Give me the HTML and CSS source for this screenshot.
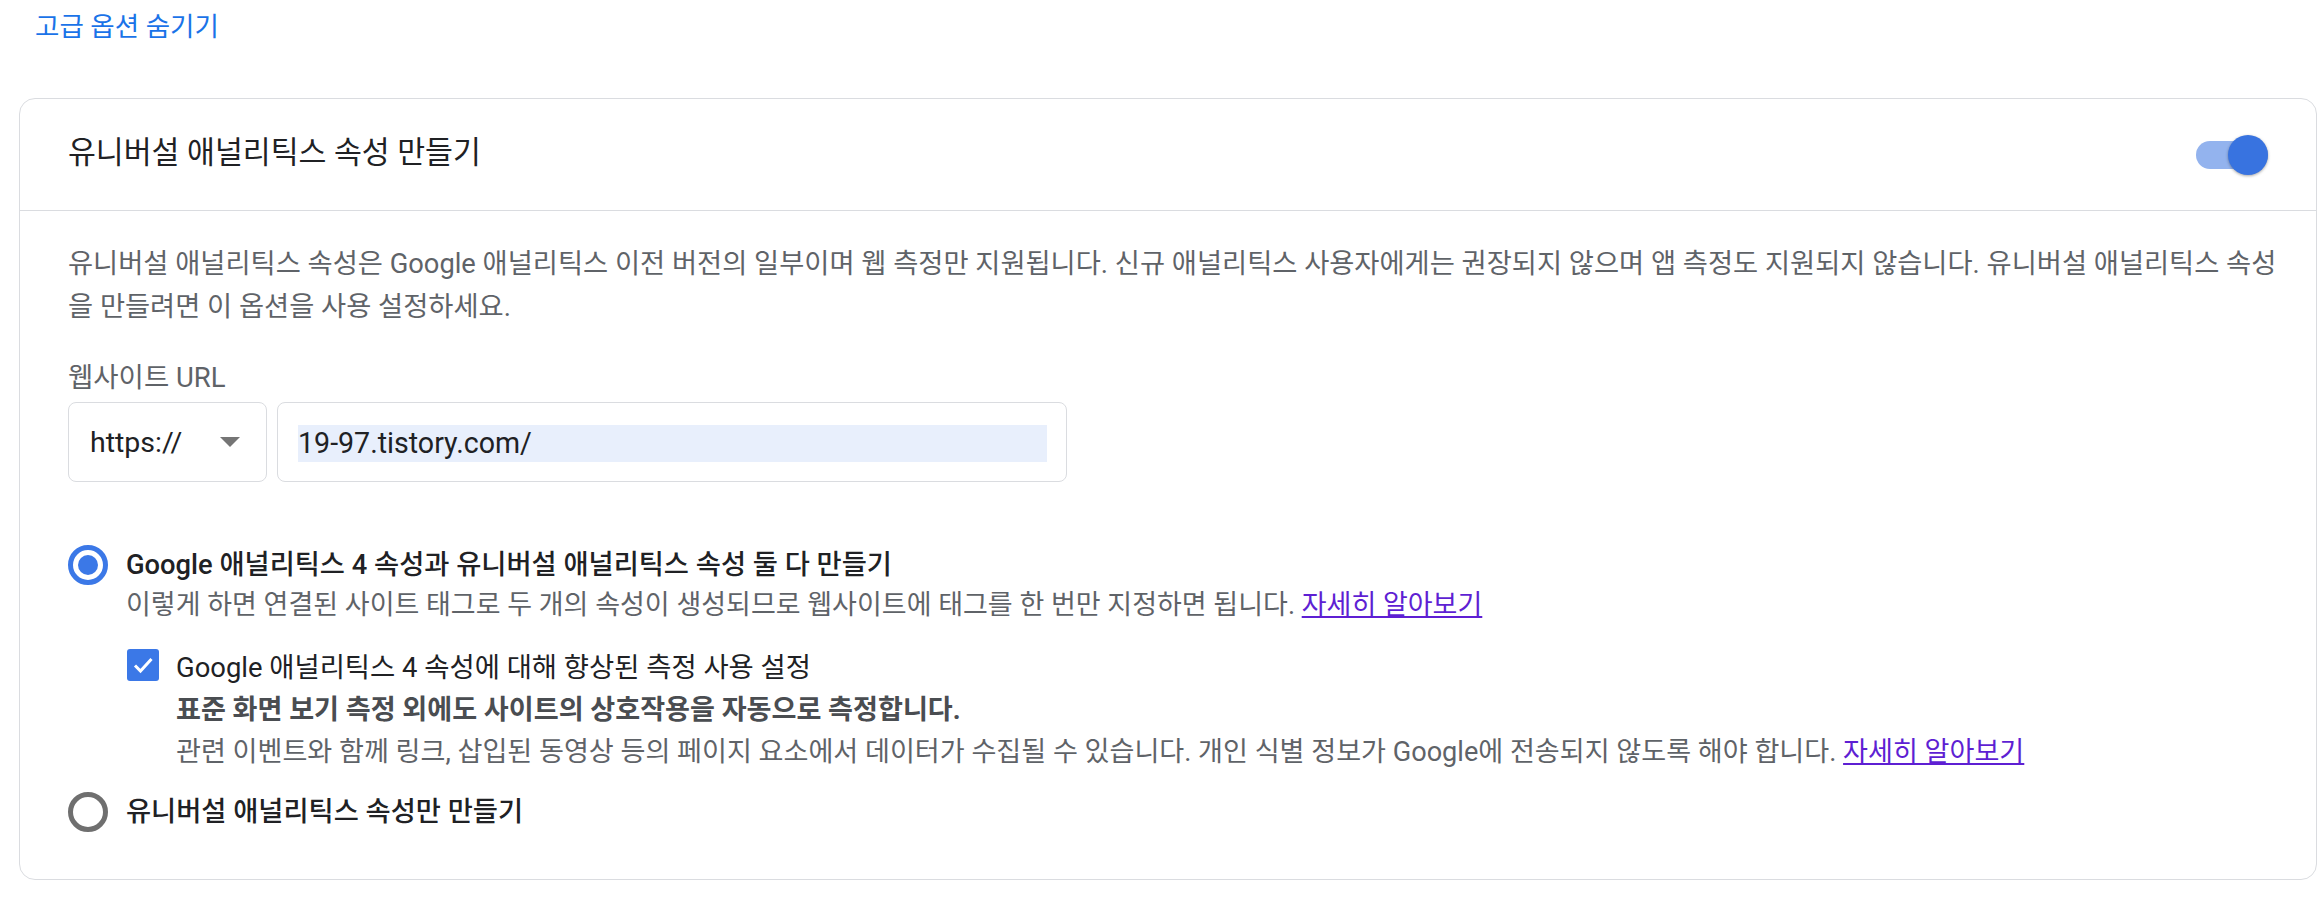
FILE: index.html
```html
<!DOCTYPE html>
<html lang="ko">
<head>
<meta charset="utf-8">
<title>유니버설 애널리틱스 속성 만들기</title>
<link rel="stylesheet" href="styles.css">
</head>
<body>
<div class="page">
  <a class="adv-link" href="#">고급 옵션 숨기기</a>
  <section class="card">
    <header class="card-head">
      <h2 class="card-title">유니버설 애널리틱스 속성 만들기</h2>
      <span class="toggle"><span class="knob"></span></span>
    </header>
    <div class="card-body">
      <p class="desc">유니버설 애널리틱스 속성은 Google 애널리틱스 이전 버전의 일부이며 웹 측정만 지원됩니다. 신규 애널리틱스 사용자에게는 권장되지 않으며 앱 측정도 지원되지 않습니다. 유니버설 애널리틱스 속성을 만들려면 이 옵션을 사용 설정하세요.</p>
      <label class="field-label">웹사이트 URL</label>
      <div class="url-row">
        <div class="select"><span>https://</span><span class="caret"></span></div>
        <div class="input"><span class="input-inner">19-97.tistory.com/</span></div>
      </div>
      <div class="options">
        <div class="radio-row">
          <span class="radio checked"><span class="dot"></span></span>
          <div class="radio-text">
            <div class="radio-label">Google 애널리틱스 4 속성과 유니버설 애널리틱스 속성 둘 다 만들기</div>
            <div class="radio-sub">이렇게 하면 연결된 사이트 태그로 두 개의 속성이 생성되므로 웹사이트에 태그를 한 번만 지정하면 됩니다. <a class="more" href="#">자세히 알아보기</a></div>
            <div class="check-row">
              <span class="checkbox"><svg width="32" height="32" viewBox="0 0 32 32"><path d="M8 16.5 L13.5 22 L24.5 10" fill="none" stroke="#fff" stroke-width="3"/></svg></span>
              <span class="check-label">Google 애널리틱스 4 속성에 대해 향상된 측정 사용 설정</span>
            </div>
            <div class="check-detail">
              <p class="detail-strong">표준 화면 보기 측정 외에도 사이트의 상호작용을 자동으로 측정합니다.</p>
              <p class="detail-text">관련 이벤트와 함께 링크, 삽입된 동영상 등의 페이지 요소에서 데이터가 수집될 수 있습니다. 개인 식별 정보가 Google에 전송되지 않도록 해야 합니다. <a class="more" href="#">자세히 알아보기</a></p>
            </div>
          </div>
        </div>
        <div class="radio-row second">
          <span class="radio"></span>
          <div class="radio-text">
            <div class="radio-label">유니버설 애널리틱스 속성만 만들기</div>
          </div>
        </div>
      </div>
    </div>
  </section>
</div>
</body>
</html>
```

FILE: styles.css
```css
html, body {
  margin: 0;
  background: #ffffff;
}
body {
  font-family: Roboto, "Noto Sans CJK KR", sans-serif;
  color: #202124;
}
.page {
  padding: 7px 7px 0 19px;
}
.adv-link {
  display: block;
  padding-left: 16px;
  font-size: 26.5px;
  line-height: 40px;
  color: #1a73e8;
  text-decoration: none;
  margin-bottom: 51px;
}
.card {
  border: 1px solid #dadce0;
  border-radius: 16px;
}
.card-head {
  display: flex;
  align-items: center;
  justify-content: space-between;
  height: 111px;
  padding: 0 48px;
  border-bottom: 1px solid #dadce0;
}
.card-title {
  margin: 0;
  font-size: 30.3px;
  font-weight: 400;
  color: #202124;
  line-height: 40px;
  margin-top: -3px;
}
.toggle {
  position: relative;
  display: flex;
  align-items: center;
  justify-content: flex-end;
  width: 72px;
  height: 40px;
}
.toggle::before {
  content: "";
  position: absolute;
  left: 0;
  right: 0;
  top: 6px;
  height: 28px;
  border-radius: 14px;
  background: #93b3ee;
}
.knob {
  position: relative;
  width: 40px;
  height: 40px;
  border-radius: 50%;
  background: #3873e0;
  box-shadow: 0 1px 3px rgba(0, 0, 0, 0.35);
}
.card-body {
  padding: 32px 28px 47px 48px;
}
.desc {
  margin: 0;
  font-size: 27.3px;
  line-height: 43px;
  color: #5f6368;
}
.field-label {
  display: block;
  margin-top: 31px;
  margin-bottom: 6px;
  font-size: 27.5px;
  line-height: 36px;
  color: #5f6368;
}
.url-row {
  display: flex;
  gap: 10px;
}
.select {
  box-sizing: border-box;
  width: 199px;
  height: 80px;
  border: 1px solid #dadce0;
  border-radius: 8px;
  display: flex;
  align-items: center;
  justify-content: space-between;
  padding: 0 26px 0 21px;
  font-size: 28.5px;
  color: #202124;
}
.caret {
  width: 0;
  height: 0;
  border-left: 10px solid transparent;
  border-right: 10px solid transparent;
  border-top: 10px solid #757575;
}
.input {
  box-sizing: border-box;
  width: 790px;
  height: 80px;
  border: 1px solid #dadce0;
  border-radius: 8px;
  display: flex;
  align-items: center;
  padding: 2px 19px 0 20px;
}
.input-inner {
  flex: 1;
  height: 37px;
  line-height: 37px;
  background: #e8effc;
  font-size: 28.6px;
  color: #202124;
}
.options {
  margin-top: 63px;
}
.radio-row {
  display: flex;
  align-items: flex-start;
  gap: 18px;
}
.radio-row.second {
  margin-top: 19px;
}
.radio {
  box-sizing: border-box;
  flex-shrink: 0;
  width: 40px;
  height: 40px;
  border-radius: 50%;
  border: 5px solid #6f6f6f;
  display: flex;
  align-items: center;
  justify-content: center;
}
.radio.checked {
  border-color: #3b78e7;
}
.dot {
  width: 20px;
  height: 20px;
  border-radius: 50%;
  background: #3b78e7;
}
.radio-label {
  font-size: 27.3px;
  line-height: 40px;
  font-weight: 500;
  color: #202124;
}
.radio-sub {
  font-size: 27px;
  line-height: 40px;
  color: #5f6368;
}
.more {
  color: #5e1fd3;
  text-decoration: underline;
}
.check-row {
  display: flex;
  align-items: center;
  gap: 17px;
  height: 40px;
  margin-top: 20px;
}
.checkbox {
  width: 32px;
  height: 32px;
  border-radius: 3px;
  background: #3b78e7;
  display: flex;
  margin-left: 1px;
}
.check-label {
  font-size: 27.4px;
  color: #202124;
}
.check-detail {
  margin-top: 4px;
  padding-left: 50px;
}
.check-detail p {
  margin: 0;
  font-size: 27.1px;
  line-height: 42px;
  color: #5f6368;
}
.check-detail .detail-strong {
  font-weight: 700;
  color: #4a4d51;
}
```
